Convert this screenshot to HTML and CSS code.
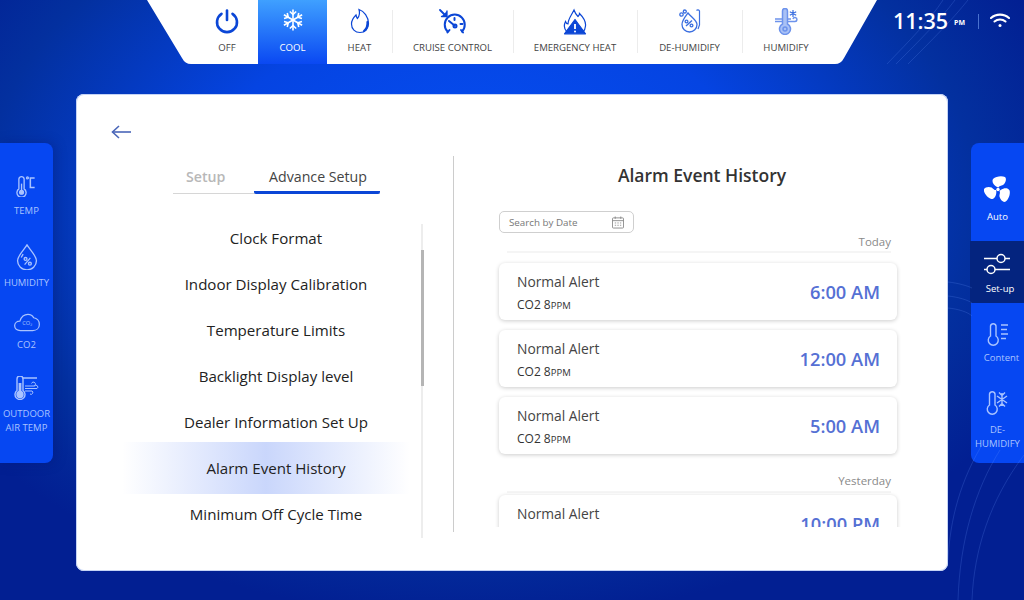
FILE: index.html
```html
<!DOCTYPE html>
<html lang="en">
<head>
    <meta charset="UTF-8">
    <meta name="viewport" content="width=device-width, initial-scale=1.0">
    <title>Alarm Event History</title>
    <link rel="stylesheet" href="styles.css">
</head>
<body>
    <svg class="bg-lines" width="1024" height="600" viewBox="0 0 1024 600" fill="none" stroke="#6f9bff" stroke-opacity=".2">
        <path d="M887 64C910 40 930 20 943 0"/>
        <path d="M896 64C920 40 940 20 955 0"/>
        <path d="M908 64C932 40 952 20 968 0"/>
        <path d="M948 282C958 283 968 286 972 288"/>
        <path d="M948 296C958 297 968 300 972 303"/>
        <path d="M948 308C958 309 968 312 972 316"/>
        <path d="M948 560C950 520 960 480 985 440"/>
        <path d="M958 600C960 540 975 490 1000 450"/>
        <path d="M972 600C974 550 990 500 1024 455"/>
    </svg>

    <header class="topbar">
        <svg class="topbar-shape" width="730" height="64" viewBox="0 0 730 64">
            <path d="M0 0H730L697 58Q694 64 688 64H44Q38 64 35 58Z" fill="#fff"/>
        </svg>
        <nav class="modes">
            <div class="mode mode-off">
                <svg width="26" height="26" viewBox="0 0 26 26" fill="none" stroke="#0b46d6" stroke-width="2.6" stroke-linecap="round"><path d="M13 2.500V12"/><path d="M7.500 5.800a10 10 0 1 0 11 0"/></svg>
                <span>OFF</span>
            </div>
            <div class="mode mode-cool active">
                <svg width="24" height="24" viewBox="0 0 24 24" fill="none" stroke="#fff" stroke-width="1.6"><g><path d="M12 1.500V22.500"/><path d="M8.800 3.500L12 6.500L15.200 3.500"/><path d="M8.800 20.500L12 17.500L15.200 20.500"/></g><g transform="rotate(60 12 12)"><path d="M12 1.500V22.500"/><path d="M8.800 3.500L12 6.500L15.200 3.500"/><path d="M8.800 20.500L12 17.500L15.200 20.500"/></g><g transform="rotate(120 12 12)"><path d="M12 1.500V22.500"/><path d="M8.800 3.500L12 6.500L15.200 3.500"/><path d="M8.800 20.500L12 17.500L15.200 20.500"/></g></svg>
                <span>COOL</span>
            </div>
            <div class="mode mode-heat">
                <svg width="20" height="26" viewBox="0 0 20 26" fill="none" stroke="#0b46d6" stroke-width="1.2" stroke-linecap="round"><path d="M9 1.500C14 3 18.500 9 18.500 15.500C18.500 21 15 24.500 10 24.500C5 24.500 1.500 21 1.500 16C1.500 12 3.500 9.500 6 7C6.500 9 7 10 7.500 10.500C9.500 8 10 5 9 1.500Z"/><path d="M14 23C16.500 21 17.800 18 17.500 14" stroke-width="2.200"/></svg>
                <span>HEAT</span>
            </div>
            <div class="mode mode-cruise">
                <svg width="28" height="28" viewBox="0 0 28 28" fill="none" stroke="#0b46d6" stroke-width="2" stroke-linecap="round"><path d="M8.500 23.500A10 10 0 1 1 23 23.500"/><path d="M10 13L15.500 17.500"/><circle cx="16" cy="18" r="1.500"/><path d="M15.500 10V12M21.500 16H23.500M10.500 22L8.500 24.500M22 22L24 24.500"/><path d="M1 2L7 8" stroke-width="1.800"/><path d="M2.500 8.500H8V3" fill="#0b46d6" stroke-width="1.300"/></svg>
                <span>CRUISE CONTROL</span>
            </div>
            <div class="mode mode-emergency">
                <svg width="24" height="27" viewBox="0 0 24 27" fill="none" stroke="#0b46d6" stroke-width="1.200"><path d="M4 24C1 21 0.800 17 2.500 13.500C3 15 4 16 5 16C5 11 8 8 11 2C12 5 13.500 7 15 8.500C16 7.500 16.500 6.500 16.500 5.500C20 9 23 14 22.500 18C22.300 20.500 21.500 22.500 20 24"/><path d="M12 11.500L22.500 25.800H1.500Z" fill="#0b46d6" stroke-linejoin="round"/><path d="M12 16V21" stroke="#fff" stroke-width="1.800"/><circle cx="12" cy="23.500" r="1" fill="#fff" stroke="none"/></svg>
                <span>EMERGENCY HEAT</span>
            </div>
            <div class="mode mode-dehumid">
                <svg width="22" height="26" viewBox="0 0 22 26" fill="none" stroke="#3b6fe0" stroke-width="1.300"><path d="M9 5C6 9 3 12.500 3 16.500A7.500 7.500 0 0 0 18 16.500C18 12.500 12 9 9 5Z"/><path d="M17.500 2.500A1.800 1.800 0 0 1 20.500 3V17L19 21" stroke-width="1.200"/><path d="M7 18L13 12.500" stroke-width="1.400"/><circle cx="7.500" cy="13.500" r="1.400"/><circle cx="12.500" cy="17.500" r="1.400"/><circle cx="2.500" cy="6.500" r="1.700"/><circle cx="5.800" cy="3.500" r="1.500"/></svg>
                <span>DE-HUMIDIFY</span>
            </div>
            <div class="mode mode-humid">
                <svg width="24" height="27" viewBox="0 0 24 27" fill="none" stroke="#6d93ec" stroke-width="1.500"><path d="M8.500 3A2.500 2.500 0 0 1 13.500 3V16A5.500 5.500 0 1 1 8.500 16Z" fill="#a9c1f5"/><circle cx="11" cy="21" r="2"/><path d="M1 11H8M1 13.500H8M14 13.500H21A2 2 0 1 0 19 11M14 11H17"/><path d="M19 2V9M15.800 3.800L22.200 7.200M22.200 3.800L15.800 7.200" stroke="#3b6fe0" stroke-width="1.200"/></svg>
                <span>HUMIDIFY</span>
            </div>
        </nav>
    </header>

    <div class="status">
        <span class="clock">11:35</span><span class="ampm">PM</span>
        <span class="status-sep"></span>
        <svg class="wifi" width="20" height="15" viewBox="0 0 20 15" fill="none" stroke="#fff" stroke-width="2.100" stroke-linecap="round"><path d="M1 5C6 0.500 14 0.500 19 5"/><path d="M4.500 8.500C7.500 5.800 12.500 5.800 15.500 8.500"/><circle cx="10" cy="12.500" r="1.500" fill="#fff" stroke="none"/></svg>
    </div>

    <main class="main">
        <aside class="side side-left">
            <div class="side-item item-temp">
                <svg width="24" height="22" viewBox="0 0 24 22" fill="none" stroke="#a9c3ff" stroke-width="1.400"><path d="M3.500 3A2.800 2.800 0 0 1 9 3V13.500A4.800 4.800 0 1 1 3.500 13.500Z"/><circle cx="6.300" cy="17" r="2" fill="#a9c3ff"/><path d="M6.300 8V16"/><circle cx="12.500" cy="2" r="1"/><path d="M20 2H15.500V12H20" stroke-width="1.600"/></svg>
                <span>TEMP</span>
            </div>
            <div class="side-item item-humidity">
                <svg width="22" height="27" viewBox="0 0 22 27" fill="none" stroke="#a9c3ff" stroke-width="1.400"><path d="M11 1C8 6 1.200 12 1.200 17.500A9.800 9.300 0 0 0 20.800 17.500C20.800 12 14 6 11 1Z"/><path d="M5 14L7 10.500"/><path d="M8.500 21.500L14.500 14.500" stroke-width="1.300"/><circle cx="9.500" cy="15.500" r="1.500"/><circle cx="14" cy="20.500" r="1.500"/></svg>
                <span>HUMIDITY</span>
            </div>
            <div class="side-item item-co2">
                <svg width="28" height="20" viewBox="0 0 28 20" fill="none" stroke="#a9c3ff" stroke-width="1.300"><path d="M7 18.500C3.500 18.500 1 16.500 1 13.500C1 10.500 3.500 8.500 6.500 8.500C8 4 11 1.500 15 1.500C18 1.500 20 3 21 5C24.500 5.500 27 8.500 27 12C27 16 24 18.500 20 18.500Z"/><text x="9" y="13" class="co2-text">CO₂</text></svg>
                <span>CO2</span>
            </div>
            <div class="side-item item-outdoor">
                <svg width="26" height="24" viewBox="0 0 26 24" fill="none" stroke="#a9c3ff" stroke-width="1.400"><path d="M3 3A3 3 0 0 1 9 3V14.500A5 5 0 1 1 3 14.500Z"/><path d="M6 7V17" stroke-width="2.800"/><circle cx="6" cy="18.500" r="3" fill="#a9c3ff"/><path d="M9 2H23" stroke-width="1.500"/><path d="M11 10H20A2 2 0 1 0 17.500 7.500" stroke-width="1"/><path d="M11 12.500H23A1.800 1.800 0 1 0 20.500 10" stroke-width="1"/><path d="M11 15H18A1.800 1.800 0 1 1 16 18" stroke-width="1"/></svg>
                <span>OUTDOOR<br>AIR TEMP</span>
            </div>
        </aside>

        <section class="card">
            <div class="left-col">
                <svg class="back" width="20" height="14" viewBox="0 0 20 14" fill="none" stroke="#4a66b8" stroke-width="1.600"><path d="M1.500 7H20"/><path d="M8 1L1.500 7L8 13"/></svg>
                <div class="tabs">
                    <span class="tab">Setup</span>
                    <span class="tab tab-on">Advance Setup</span>
                </div>
                <div class="menu-wrap">
                    <ul class="menu">
                        <li>Clock Format</li>
                        <li>Indoor Display Calibration</li>
                        <li>Temperature Limits</li>
                        <li>Backlight Display level</li>
                        <li>Dealer Information Set Up</li>
                        <li class="current">Alarm Event History</li>
                        <li>Minimum Off Cycle Time</li>
                    </ul>
                    <div class="scroll"><div class="thumb"></div></div>
                </div>
            </div>

            <div class="right-col">
                <h2>Alarm Event History</h2>
                <div class="search">
                    <span>Search by Date</span>
                    <svg width="12" height="13" viewBox="0 0 13 13" fill="none" stroke="#8a8a8a"><rect x="0.500" y="1.500" width="12" height="11" rx="1"/><path d="M0.500 4.500H12.500M3.500 0V2.500M9.500 0V2.500"/><path d="M3 7H4.500M5.800 7H7.300M8.600 7H10M3 9.500H4.500M5.800 9.500H7.300M8.600 9.500H10" stroke-width=".9"/></svg>
                </div>
                <div class="events">
                    <div class="day">Today</div>
                    <div class="event">
                        <div><div class="event-name">Normal Alert</div><div class="event-sub">CO2 8<small>PPM</small></div></div>
                        <div class="event-time">6:00 AM</div>
                    </div>
                    <div class="event">
                        <div><div class="event-name">Normal Alert</div><div class="event-sub">CO2 8<small>PPM</small></div></div>
                        <div class="event-time">12:00 AM</div>
                    </div>
                    <div class="event">
                        <div><div class="event-name">Normal Alert</div><div class="event-sub">CO2 8<small>PPM</small></div></div>
                        <div class="event-time">5:00 AM</div>
                    </div>
                    <div class="day day-later">Yesterday</div>
                    <div class="event">
                        <div><div class="event-name">Normal Alert</div><div class="event-sub">CO2 8<small>PPM</small></div></div>
                        <div class="event-time">10:00 PM</div>
                    </div>
                </div>
            </div>
        </section>

        <aside class="side side-right">
            <div class="side-item item-auto">
                <svg width="28" height="27" viewBox="0 0 28 27" fill="#fff"><path d="M13 11C9.500 9 7.500 6 9 3C12 0 18 -0.500 21 1C23 3 21.500 7 19 9C17 10 15 10 14.500 11.500Z"/><path d="M13 11C9.500 9 7.500 6 9 3C12 0 18 -0.500 21 1C23 3 21.500 7 19 9C17 10 15 10 14.500 11.500Z" transform="rotate(120 14 13.500)"/><path d="M13 11C9.500 9 7.500 6 9 3C12 0 18 -0.500 21 1C23 3 21.500 7 19 9C17 10 15 10 14.500 11.500Z" transform="rotate(240 14 13.500)"/><circle cx="14" cy="13.500" r="1.700"/></svg>
                <span>Auto</span>
            </div>
            <div class="side-item item-setup">
                <svg width="28" height="24" viewBox="0 0 28 24" fill="none" stroke="#fff" stroke-width="1.500"><path d="M1 6.500H14M22 6.500H27M1 17.500H4M12 17.500H27"/><circle cx="18" cy="6.500" r="4"/><circle cx="8" cy="17.500" r="4"/></svg>
                <span>Set-up</span>
            </div>
            <div class="side-item item-content">
                <svg width="22" height="23" viewBox="0 0 22 23" fill="none" stroke="#a9c3ff" stroke-width="1.400"><path d="M3.500 3A2.800 2.800 0 0 1 9 3V13A5 5 0 1 1 3.500 13Z"/><path d="M14 2H21M14 6.500H20M14 11H21M14 15.500H19"/></svg>
                <span>Content</span>
            </div>
            <div class="side-item item-dehumid">
                <svg width="24" height="24" viewBox="0 0 24 24" fill="none" stroke="#a9c3ff" stroke-width="1.400"><path d="M3.500 3A2.800 2.800 0 0 1 9 3V14A5 5 0 1 1 3.500 14Z"/><path d="M16 2V15M11 5L21 12M11 12L21 5M19 1.500L16 4.500L13 1.500M13 15.500L16 12.500L19 15.500"/></svg>
                <span>DE-<br>HUMIDIFY</span>
            </div>
        </aside>
    </main>
</body>
</html>
```

FILE: styles.css
```css
* {
    box-sizing: border-box;
}
body {
    position: relative;
    width: 1024px;
    height: 600px;
    margin: 0;
    overflow: hidden;
    font-family: "Open Sans", "Noto Sans", sans-serif;
    color: #333;
    background: radial-gradient(ellipse 620px 420px at 480px 200px, #0650f5 0%, #0544e2 45%, #03309f 80%, #021f92 100%);
}
.bg-lines {
    position: absolute;
    left: 0;
    top: 0;
}

/* top bar */
.topbar {
    position: relative;
    width: 730px;
    height: 64px;
    margin-left: 147px;
}
.topbar-shape {
    position: absolute;
    left: 0;
    top: 0;
}
.modes {
    position: relative;
    display: flex;
    height: 64px;
    margin-left: 49px;
}
.mode {
    position: relative;
    display: flex;
    flex-direction: column;
    align-items: center;
    justify-content: flex-end;
    padding-bottom: 10px;
    font-size: 9.6px;
    color: #444;
    white-space: nowrap;
}
.mode svg {
    position: absolute;
    top: 8px;
    left: 50%;
    transform: translateX(-50%);
}
.mode-off { width: 62px; }
.mode-cool { width: 69px; }
.mode-heat { width: 65px; }
.mode-cruise { width: 121px; }
.mode-emergency { width: 124px; }
.mode-dehumid { width: 105px; }
.mode-humid { width: 88px; }
.mode-cruise::before,
.mode-emergency::before,
.mode-dehumid::before,
.mode-humid::before {
    content: "";
    position: absolute;
    left: 0;
    top: 10px;
    bottom: 11px;
    width: 1px;
    background: #ececec;
}
.mode.active {
    color: #fff;
    background: linear-gradient(#3fa0ff, #0a48f2);
}

/* clock, wifi */
.status {
    position: absolute;
    left: 893px;
    top: 8px;
    display: flex;
    align-items: center;
    color: #fff;
}
.clock {
    font-size: 21.5px;
    font-weight: 600;
    line-height: 26px;
}
.ampm {
    margin: 3px 0 0 6px;
    font-size: 7px;
    font-weight: 700;
}
.status-sep {
    width: 1px;
    height: 15px;
    margin: 0 11px 0 13px;
    background: #4a72cf;
}
.wifi {
    margin-top: -2px;
}

/* main row */
.main {
    display: flex;
    justify-content: space-between;
    align-items: flex-start;
}
.side {
    display: flex;
    flex-direction: column;
    width: 53px;
    height: 320px;
    margin-top: 79px;
    background: #0647f2;
    text-align: center;
    color: #a9c3ff;
    font-size: 9.5px;
    line-height: 14px;
}
.side-left {
    border-radius: 0 8px 8px 0;
    box-shadow: 2px 0 12px rgba(0, 20, 110, .35);
}
.side-right {
    border-radius: 8px 0 0 8px;
}
.side-item {
    display: flex;
    flex-direction: column;
    align-items: center;
    white-space: nowrap;
}
.item-temp { height: 75px; padding-top: 33px; }
.item-temp svg { margin-bottom: 7px; }
.item-humidity { height: 72px; padding-top: 26px; }
.item-humidity svg { margin-bottom: 6px; }
.item-co2 { height: 62px; padding-top: 23px; }
.item-co2 svg { margin-bottom: 6px; }
.item-outdoor { padding-top: 24px; }
.item-outdoor svg { margin-bottom: 7px; }
.item-auto { height: 98px; padding-top: 33px; color: #fff; }
.item-auto svg { margin-bottom: 7px; }
.item-setup {
    height: 62px;
    margin-left: -1px;
    padding-top: 11px;
    background: #04247f;
    color: #fff;
}
.item-setup svg { margin-bottom: 6px; }
.item-setup span { margin-left: 6px; }
.item-content { height: 62px; padding-top: 20px; }
.item-content svg { margin-bottom: 5px; }
.item-content span { margin-left: 8px; }
.item-dehumid { padding-top: 26px; }
.item-dehumid svg { margin-bottom: 8px; }
.co2-text {
    font-size: 6px;
    fill: #a9c3ff;
    stroke: none;
}

/* card */
.card {
    display: flex;
    width: 872px;
    height: 477px;
    margin-top: 30px;
    background: #fff;
    border-radius: 8px;
    box-shadow: inset 0 0 0 1px #c4d3f5;
}
.left-col {
    width: 377px;
    height: 100%;
    padding: 31px 0 0 35px;
}
.back {
    display: block;
}
.tabs {
    display: flex;
    width: 207px;
    margin: 26px 0 0 62px;
    border-bottom: 1px solid #d6d6d6;
    font-size: 14.2px;
    line-height: 24px;
}
.tab {
    width: 81px;
    height: 28px;
    padding: 0 0 0 13px;
    color: #b8b8b8;
    font-weight: 600;
}
.tab-on {
    width: 126px;
    margin-bottom: -2px;
    height: 29px;
    text-align: center;
    padding: 0 0 0 2px;
    color: #444;
    font-weight: 400;
    border-bottom: 3px solid #0b46d6;
    border-radius: 2px;
}
.menu-wrap {
    display: flex;
    margin: 30px 0 0 11px;
}
.menu {
    width: 288px;
    margin: 0;
    padding: 0;
    list-style: none;
    font-size: 15.1px;
    color: #222;
    text-align: center;
}
.menu li {
    height: 46px;
    padding-left: 20px;
    line-height: 28px;
    white-space: nowrap;
}
.menu .current {
    height: 52px;
    margin: -12px 0 6px;
    padding-top: 12px;
    background: linear-gradient(90deg, rgba(11, 70, 240, 0), rgba(11, 70, 240, .22) 50%, rgba(11, 70, 240, 0));
}
.scroll {
    width: 2px;
    height: 314px;
    margin-left: 11px;
    background: #ededed;
}
.thumb {
    width: 3px;
    height: 136px;
    margin-top: 26px;
    background: #b5b5b5;
}
.right-col {
    position: relative;
    width: 494px;
    height: 376px;
    margin-top: 62px;
    padding-left: 45px;
    border-left: 1px solid #ccc;
}
.right-col h2 {
    position: relative;
    top: 4px;
    width: 406px;
    margin: 0;
    text-align: center;
    font-size: 17.5px;
    font-weight: 600;
    line-height: 30px;
    color: #333;
}
.search {
    display: flex;
    justify-content: space-between;
    align-items: center;
    width: 135px;
    height: 22px;
    margin-top: 25px;
    padding: 0 9px 0 9px;
    border: 1px solid #cfcfcf;
    border-radius: 5px;
    font-size: 9.800px;
    color: #777;
}
.events {
    width: 418px;
    height: 294px;
    margin-left: -10px;
    padding: 0 10px;
    overflow: hidden;
}
.day {
    width: 384px;
    height: 19px;
    margin: 1px 0 0 8px;
    font-size: 11.5px;
    line-height: 16px;
    text-align: right;
    color: #8a8a8a;
    border-bottom: 2px solid #f5f5f5;
}
.day-later {
    margin-top: 20px;
    line-height: 14px;
}
.event {
    display: flex;
    justify-content: space-between;
    align-items: center;
    width: 398px;
    height: 57px;
    margin-top: 10px;
    padding: 0 17px 0 18px;
    background: #fff;
    border-radius: 6px;
    box-shadow: 0 1px 4px rgba(0, 0, 0, .2);
}
.day-later + .event {
    margin-top: 2px;
}
.event-name {
    margin-top: 2px;
    font-size: 13.800px;
    line-height: 20px;
    color: #444;
}
.event-sub {
    margin-top: 6px;
    font-size: 12px;
    line-height: 14px;
    color: #333;
}
.event-sub small {
    font-size: 9.500px;
}
.event-time {
    font-size: 18.300px;
    font-weight: 600;
    color: #5570d4;
}
```
